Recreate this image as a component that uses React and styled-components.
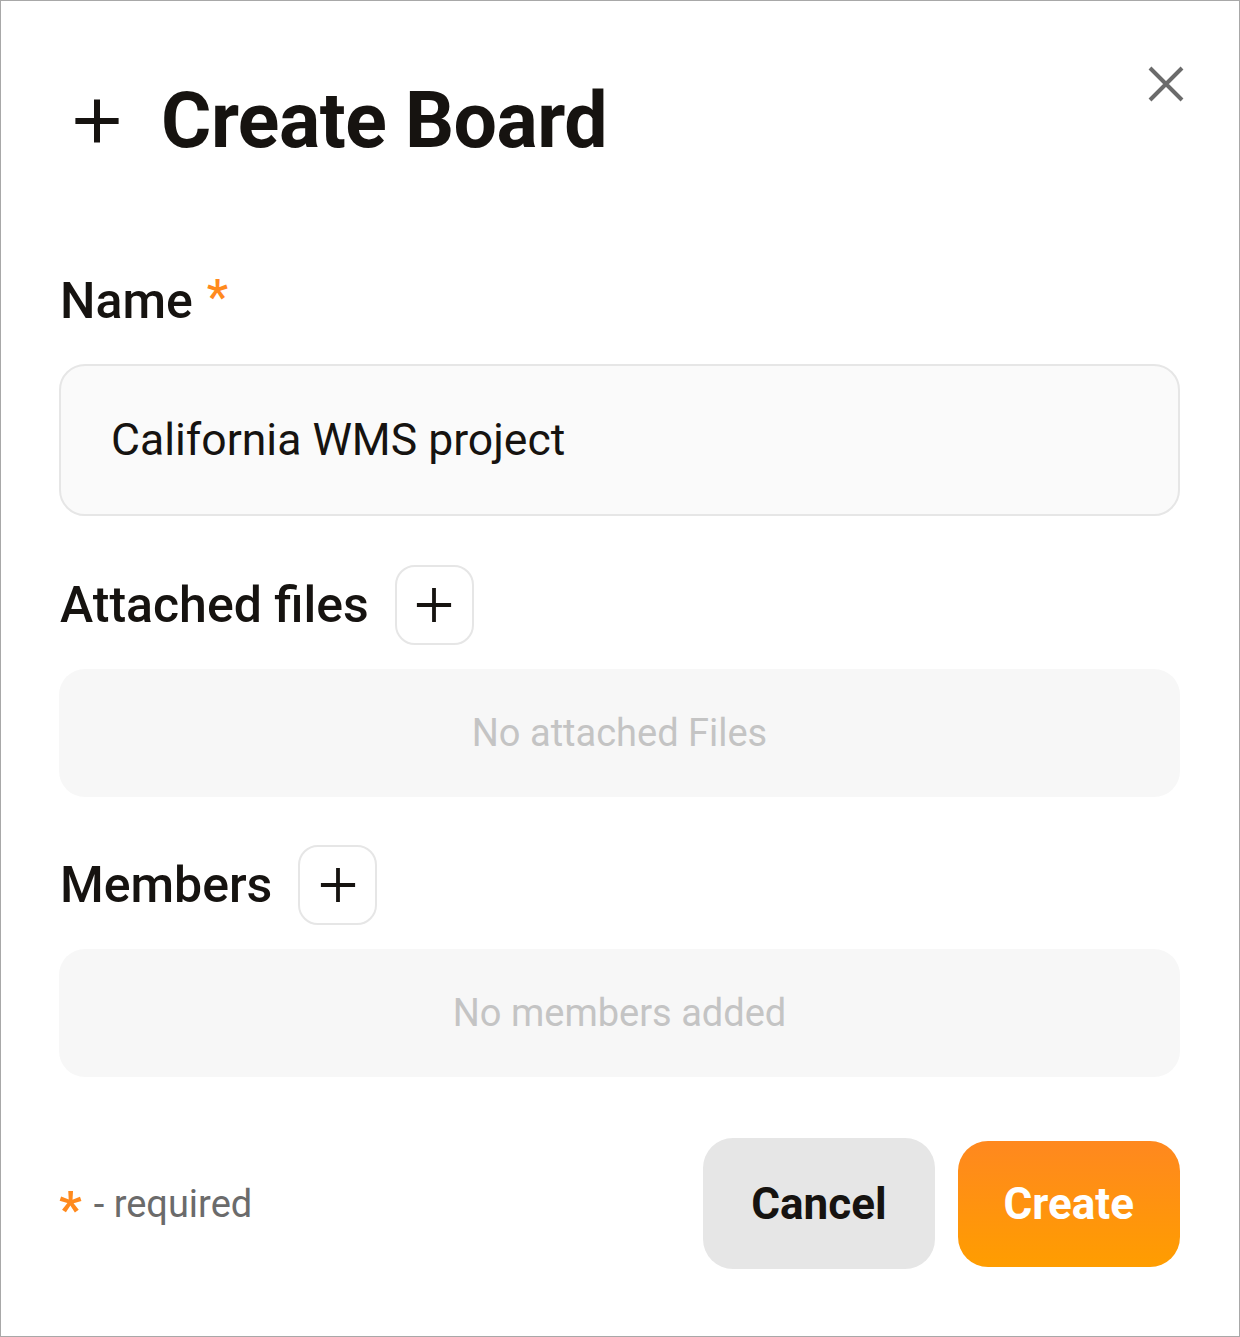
import styled, { createGlobalStyle } from "styled-components";

const GlobalStyle = createGlobalStyle`
    * {
        box-sizing: border-box;
    }
    body {
        margin: 0;
        background: #fff;
        font-family: Roboto, "Liberation Sans", sans-serif;
        color: #161310;
    }
`;

function PlusIcon({ size = 40, stroke = 4 }) {
    return (
        <svg width={size} height={size} viewBox="0 0 40 40" fill="none">
            <path d="M20 2v36M2 20h36" stroke="currentColor" strokeWidth={stroke} />
        </svg>
    );
}

function CloseIcon() {
    return (
        <svg width="38" height="38" viewBox="0 0 38 38" fill="none">
            <path d="M3 3l32 32M35 3L3 35" stroke="currentColor" strokeWidth="4" />
        </svg>
    );
}

export default function App() {
    return (
        <>
            <GlobalStyle />
            <Modal>
                <CloseButton aria-label="Close">
                    <CloseIcon />
                </CloseButton>

                <Header>
                    <TitleIcon>
                        <PlusIcon size={48} stroke={5} />
                    </TitleIcon>
                    <Title>Create Board</Title>
                </Header>

                <Field spacing={80}>
                    <LabelRow>
                        <Label>Name</Label>
                        <Star>*</Star>
                    </LabelRow>
                    <Input defaultValue="California WMS project" />
                </Field>

                <Field spacing={49}>
                    <LabelRow>
                        <Label>Attached files</Label>
                        <AddButton aria-label="Add file">
                            <PlusIcon size={38} stroke={4} />
                        </AddButton>
                    </LabelRow>
                    <EmptyBox>No attached Files</EmptyBox>
                </Field>

                <Field spacing={48}>
                    <LabelRow>
                        <Label>Members</Label>
                        <AddButton aria-label="Add member">
                            <PlusIcon size={38} stroke={4} />
                        </AddButton>
                    </LabelRow>
                    <EmptyBox>No members added</EmptyBox>
                </Field>

                <Footer>
                    <Hint>
                        <Star small>*</Star> - required
                    </Hint>
                    <Actions>
                        <Button>Cancel</Button>
                        <Button primary>Create</Button>
                    </Actions>
                </Footer>
            </Modal>
        </>
    );
}

const Modal = styled.div`
    position: relative;
    width: 1240px;
    height: 1337px;
    border: 1px solid #a8a8a8;
    background: #fff;
    padding: 60px 59px 0 58px;
    display: flex;
    flex-direction: column;
`;

const CloseButton = styled.button`
    position: absolute;
    top: 64px;
    right: 54px;
    padding: 0;
    border: none;
    background: none;
    color: #6b6b6b;
    cursor: pointer;
    display: flex;
`;

const Header = styled.div`
    height: 120px;
    display: flex;
    align-items: center;
    gap: 40px;
    padding-left: 14px;
`;

const TitleIcon = styled.span`
    display: flex;
    color: #161310;
`;

const Title = styled.h1`
    margin: 0;
    font-size: 77px;
    font-weight: 700;
    line-height: 1;
    letter-spacing: -0.5px;
`;

const Field = styled.div`
    display: flex;
    flex-direction: column;
    gap: 24px;
    margin-top: ${props => props.spacing}px;
`;

const LabelRow = styled.div`
    display: flex;
    align-items: center;
    gap: 14px;
    min-height: 79px;
    padding-left: 1px;
`;

const Label = styled.span`
    font-size: 50px;
    font-weight: 500;
    line-height: 1;
    margin-right: 12px;
`;

const Star = styled.span`
    color: #ff8a1e;
    font-size: ${props => props.small ? '50px' : '48px'};
    font-weight: ${props => props.small ? '700' : '500'};
    line-height: 1;
    margin-left: ${props => props.small ? '0' : '-12px'};
    align-self: ${props => props.small ? 'auto' : 'flex-start'};
    margin-top: 12px;
`;

const Input = styled.input`
    width: 100%;
    height: 152px;
    padding: 0 50px;
    border: 2px solid #e6e6e6;
    border-radius: 26px;
    background: #fafafa;
    font-family: inherit;
    font-size: 44.5px;
    color: #161310;
    outline: none;
`;

const AddButton = styled.button`
    width: 79px;
    height: 80px;
    padding: 0;
    border: 2px solid #e6e6e6;
    border-radius: 20px;
    background: #fff;
    color: #161310;
    display: flex;
    align-items: center;
    justify-content: center;
    cursor: pointer;
`;

const EmptyBox = styled.div`
    height: 128px;
    border-radius: 26px;
    background: #f7f7f7;
    display: flex;
    align-items: center;
    justify-content: center;
    font-size: 38px;
    color: #c4c4c4;
`;

const Footer = styled.div`
    margin-top: 61px;
    display: flex;
    align-items: center;
    justify-content: space-between;
`;

const Hint = styled.div`
    font-size: 38px;
    color: #6b6b6b;
    display: flex;
    align-items: center;
    gap: 12px;
`;

const Actions = styled.div`
    display: flex;
    align-items: center;
    gap: 23px;
`;

const Button = styled.button`
    height: ${props => props.primary ? '126px' : '131px'};
    padding: 0 ${props => props.primary ? '46px' : '48px'};
    border: none;
    border-radius: 30px;
    font-family: inherit;
    font-size: 44px;
    font-weight: 700;
    cursor: pointer;
    color: ${props => props.primary ? '#fff' : '#161310'};
    background: ${props => props.primary
        ? 'linear-gradient(180deg, #ff881f 0%, #ff9d00 100%)'
        : '#e6e6e6'};
`;
